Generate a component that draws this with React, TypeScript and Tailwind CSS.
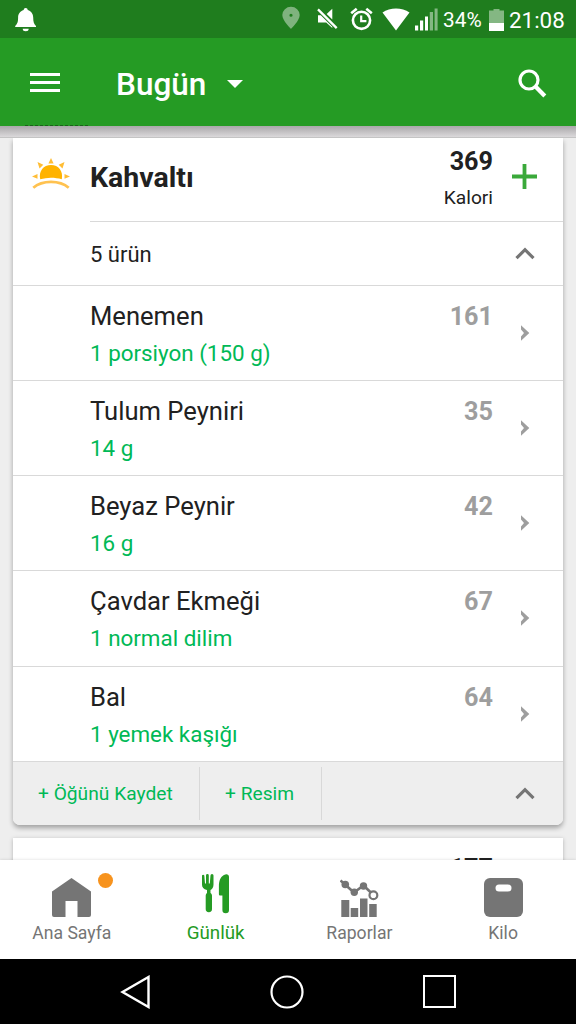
import type { ReactNode } from "react"

type Food = { name: string; amount: string; kcal: number }

const foods: Food[] = [
  { name: "Menemen", amount: "1 porsiyon (150 g)", kcal: 161 },
  { name: "Tulum Peyniri", amount: "14 g", kcal: 35 },
  { name: "Beyaz Peynir", amount: "16 g", kcal: 42 },
  { name: "Çavdar Ekmeği", amount: "1 normal dilim", kcal: 67 },
  { name: "Bal", amount: "1 yemek kaşığı", kcal: 64 },
]

function StatusBar() {
  return (
    <div className="flex h-[38px] shrink-0 items-center bg-[#1f7d1e] pt-px text-white">
      <svg className="ml-[15px]" width="22" height="24" viewBox="0 0 22 24" fill="currentColor">
        <path d="M10.7 0c1.2 0 2 .8 2 1.900C16.500 3 18.200 6 18.200 9.500c0 4.500.8 6.500 2.800 8.500v1H.2v-1C2.300 16 3.100 14 3.100 9.500 3.100 6 4.900 3 8.700 1.900c0-1.100.8-1.900 2-1.900zM7.700 20.700h6a3 2.500 0 0 1-6 0z" />
      </svg>
      <svg className="mb-1 ml-auto" width="18" height="23" viewBox="0 0 18 24" preserveAspectRatio="none">
        <path fillRule="evenodd" fill="#7fb37e" d="M9 .8a8.700 8.700 0 0 1 8.700 8.700C17.700 15.500 9 24 9 24S.3 15.500.3 9.500A8.700 8.700 0 0 1 9 .8zm0 7.200a1.600 1.600 0 1 0 0 3.200A1.600 1.600 0 0 0 9 8z" />
      </svg>
      <svg className="mb-px ml-[17px]" width="21" height="22" viewBox="0 0 21 22" fill="currentColor">
        <path d="M1.800.6 20.500 19.300 18.900 21 .2 2.200zM1 7.200h2.800L15.300 18.700V20L9.200 14.500H1zM15.300.8v10.700L9.700 5.900z" />
      </svg>
      <svg className="mb-px ml-3" width="23" height="24" viewBox="0 0 23 24" fill="none" stroke="currentColor">
        <circle cx="11.500" cy="13.300" r="8.600" strokeWidth="2.600" />
        <path d="M11.200 8.500v5.700h5.200" strokeWidth="2.200" />
        <path d="M1.200 6.300 6.700 1.700M21.800 6.300 16.300 1.700" strokeWidth="2.600" />
      </svg>
      <svg className="ml-[9px]" width="28" height="23" viewBox="0 0 28 23" fill="currentColor">
        <path d="M.5 4.500C8-1 20-1 27.500 4.500L14 22.500z" />
      </svg>
      <svg className="ml-1" width="24" height="23" viewBox="0 0 24 23" fill="currentColor">
        <path d="M1 17.500h3.200v5H1zM6 12.500h3.200v10H6zM11 8.500h3v14h-3z" />
        <path d="M15.800 4h3.200v18.500h-3.200zM20.600.5h3v22h-3z" opacity=".45" />
      </svg>
      <span className="ml-[5px] w-[46px] pt-px text-[20.800px] leading-[37px]">34%</span>
      <svg width="15" height="22" viewBox="0 0 15 22" fill="currentColor">
        <path d="M4.500 0h6v1.500H15V14H0V1.500h4.500z" opacity=".45" />
        <path d="M0 14h15v8H0z" />
      </svg>
      <span className="ml-[5px] w-[67px] pt-px text-[22.400px] leading-[37px]">21:08</span>
    </div>
  )
}

function AppBar() {
  return (
    <header className="relative flex h-[88px] shrink-0 items-center bg-[#259b24] text-white">
      <div className="ml-[30px] flex w-[30px] flex-col gap-[5px]">
        <span className="h-[3px] bg-white" />
        <span className="h-[3px] bg-white" />
        <span className="h-[3px] bg-white" />
      </div>
      <h1 className="ml-[56px] w-[90px] pt-[5px] text-[31.500px] leading-[90px] font-medium">Bugün</h1>
      <svg className="mt-[3px] ml-[21px]" width="16" height="8" viewBox="0 0 16 8" fill="currentColor">
        <path d="M0 0h16L8 8z" />
      </svg>
      <svg className="mt-[3px] mr-[29px] ml-auto" width="29" height="30" viewBox="0 0 29 30" fill="none" stroke="currentColor">
        <circle cx="11" cy="11" r="9" strokeWidth="3.200" />
        <path d="m17.500 17.500 9.300 9.500" strokeWidth="4.200" />
      </svg>
      <div className="absolute bottom-0 left-[25px] w-[63px] border-b border-dashed border-[#1c611b]" />
      <div className="absolute top-full left-0 z-10 h-3 w-full border-b border-[#c4c4c4] bg-linear-to-b from-[#aaa8aa] to-[#dbd9db]" />
    </header>
  )
}

function SunIcon() {
  return (
    <svg width="38" height="32" viewBox="0 0 38 32">
      <path d="M8.200 21.300C6.500 13 11.500 7 19 7s12.500 6 10.800 14.300c-7-2-14.600-2-21.600 0z" fill="#ffb300" />
      <path d="M1.300 29.800c9-7.800 26.400-7.800 35.400 0" fill="none" stroke="#ffc250" strokeWidth="2.800" />
      <path d="M19 0l2.600 5.500h-5.200zM5.500 4l5.800 2.800-3.800 3.600zM32.500 4l-5.800 2.800 3.800 3.600zM0 18.500l5.500-2.500v4.800zM38 18.500l-5.500-2.500v4.800z" fill="#ffbd35" />
    </svg>
  )
}

function ChevronUp() {
  return (
    <svg width="20" height="13" viewBox="0 0 20 13" fill="none" stroke="#757575" strokeWidth="3.200">
      <path d="m1.500 11.200 8.500-8.500 8.500 8.500" />
    </svg>
  )
}

function FoodRow({ food }: { food: Food }) {
  return (
    <div className="flex h-[95.150px] border-b border-[#d9d9d9] pt-3 pl-[77px]">
      <div className="flex-1">
        <div className="text-[25.600px] leading-9 text-[#212121]">{food.name}</div>
        <div className="text-[22.400px] leading-[38px] text-[#00b956]">{food.amount}</div>
      </div>
      <div className="text-[25.200px] leading-[38px] font-bold text-[#9e9e9e]">{food.kcal}</div>
      <svg className="mt-[27px] mr-[33px] ml-[27px]" width="10" height="16" viewBox="0 0 10 16" fill="#9e9e9e">
        <path d="M1 .3 9.300 8 1 15.700V11.400L4 8 1 4.600z" />
      </svg>
    </div>
  )
}

function MealCard() {
  return (
    <section className="mx-[13px] mt-3 rounded-b-[7px] bg-white shadow-[0_3px_5px_rgba(0,0,0,0.32)]">
      <div className="flex h-[83px]">
        <div className="mt-5 ml-[19px] w-[58px]">
          <SunIcon />
        </div>
        <div className="flex flex-1">
          <h2 className="flex-1 text-[28.500px] leading-[79px] font-bold text-[#212121]">Kahvaltı</h2>
          <div className="text-right text-[#212121]">
            <div className="mt-[5px] text-[25.200px] leading-[38px] font-bold">369</div>
            <div className="text-[19.200px] leading-[34px]">Kalori</div>
          </div>
          <svg className="mt-[26px] mr-[26px] ml-[19px]" width="25" height="25" viewBox="0 0 25 25" stroke="#3aa93a" strokeWidth="3.800">
            <path d="M12.500 0v25M0 12.500h25" />
          </svg>
        </div>
      </div>
      <div className="ml-[77px] flex h-[64px] items-center justify-between border-t border-[#d9d9d9] pr-7 text-[22px] text-[#212121]">
        <span className="pt-[2px]">5 ürün</span>
        <ChevronUp />
      </div>
      <div className="border-t border-[#d9d9d9]">
        {foods.map((food) => (
          <FoodRow key={food.name} food={food} />
        ))}
      </div>
      <div className="flex h-[63px] items-center rounded-b-[7px] bg-[#eeeeee] text-[19.200px] text-[#00b956]">
        <div className="h-[53px] w-[187px] border-r border-[#d8d8d8] pl-[25px] leading-[53px]">+ Öğünü Kaydet</div>
        <div className="h-[53px] w-[122px] border-r border-[#d8d8d8] pl-[25px] leading-[53px]">+ Resim</div>
        <div className="mr-7 ml-auto">
          <ChevronUp />
        </div>
      </div>
    </section>
  )
}

function Tab({ label, active, children }: { label: string; active?: boolean; children: ReactNode }) {
  return (
    <div
      className={
        active
          ? "flex flex-1 flex-col items-center text-[18.800px] text-[#259b24]"
          : "flex flex-1 flex-col items-center text-[17.600px] text-[#757575]"
      }
    >
      <div className="relative mt-[14px] flex h-[43px] items-end">{children}</div>
      <div className="mt-[3px] leading-[26px]">{label}</div>
    </div>
  )
}

function BottomTabs() {
  return (
    <nav className="relative z-10 flex h-[99px] shrink-0 bg-white pr-px shadow-[0_0_3px_rgba(0,0,0,0.15)]">
      <Tab label="Ana Sayfa">
        <svg width="39" height="39" viewBox="0 0 39 39" fill="currentColor">
          <path d="M19.500 0 39 13.500V37a2 2 0 0 1-2 2H25.500V23h-12v16H2a2 2 0 0 1-2-2V13.500z" />
        </svg>
        <span className="absolute -top-[1px] left-[46px] size-[15px] rounded-full bg-[#f7931e]" />
      </Tab>
      <Tab label="Günlük" active>
        <svg className="mb-[3px]" width="27" height="40" viewBox="0 0 27 40" fill="currentColor">
          <path d="M0 1.500a1.200 1.200 0 0 1 2.300 0L3 9.500h1V1.500a1.400 1.400 0 0 1 2.800 0v8h1l.7-8a1.200 1.200 0 0 1 3 0v9c0 3-1.300 4.500-3 5.500v3c1 .8 1.500 1.500 1.500 3v13a3.100 3.100 0 0 1-6.300 0V22c0-1.500.5-2.200 1.300-3v-3C1.500 15 0 13.500 0 10.500z" />
          <path d="M27 3v33a3.300 3.300 0 0 1-6.600 0V21.500h-2c-1 0-1.500-.5-1.500-1.500v-8C16.900 6 19 1.500 23.500.4 25.500 0 27 1 27 3z" />
        </svg>
      </Tab>
      <Tab label="Raporlar">
        <svg width="39" height="38" viewBox="0 0 39 38" fill="currentColor">
          <path d="M1.300 21h8v17h-8zM10.700 29h7.500v9h-7.500zM20 19.500h7.500V38H20zM29.200 25h7.500v13h-7.500z" />
          <path d="m.5 1.500 4.500 4 9 8 9.500-7 10 9.500" fill="none" stroke="currentColor" strokeWidth="2.600" />
          <circle cx="5.300" cy="5.500" r="3.800" />
          <circle cx="14.300" cy="13.300" r="3.700" />
          <circle cx="23.500" cy="7" r="3.700" />
          <circle cx="33.400" cy="16.200" r="3.900" fill="#fff" stroke="currentColor" strokeWidth="2.200" />
        </svg>
      </Tab>
      <Tab label="Kilo">
        <svg width="39" height="39" viewBox="0 0 39 39">
          <rect width="39" height="39" rx="6" fill="currentColor" />
          <rect x="11.500" y="6.500" width="16" height="7" rx="3.500" fill="#fff" />
        </svg>
      </Tab>
    </nav>
  )
}

function SystemNav() {
  return (
    <div className="flex h-[65px] shrink-0 items-center bg-black">
      <svg className="ml-[119px]" width="31" height="34" viewBox="0 0 31 34" fill="none" stroke="#fff" strokeWidth="2.400">
        <path d="M3.500 17 29.500 2v30z" />
      </svg>
      <svg className="ml-[120px]" width="34" height="34" viewBox="0 0 34 34" fill="none" stroke="#fff" strokeWidth="2.200">
        <circle cx="17" cy="17" r="15.500" />
      </svg>
      <span className="ml-[119px] size-[33px] border-2 border-white" />
    </div>
  )
}

export default function App() {
  return (
    <div className="flex h-[1024px] w-[576px] flex-col overflow-hidden bg-[#eeeeee] font-[Roboto,sans-serif]">
      <StatusBar />
      <AppBar />
      <main className="min-h-0 flex-1 overflow-hidden">
        <MealCard />
        <section className="mx-[13px] mt-[13px] h-[90px] bg-white pr-[70px] text-right shadow-[0_1px_4px_rgba(0,0,0,0.25)]">
          <div className="pt-[12px] text-[25.200px] leading-[38px] font-bold text-[#212121]">177</div>
        </section>
      </main>
      <BottomTabs />
      <SystemNav />
    </div>
  )
}
